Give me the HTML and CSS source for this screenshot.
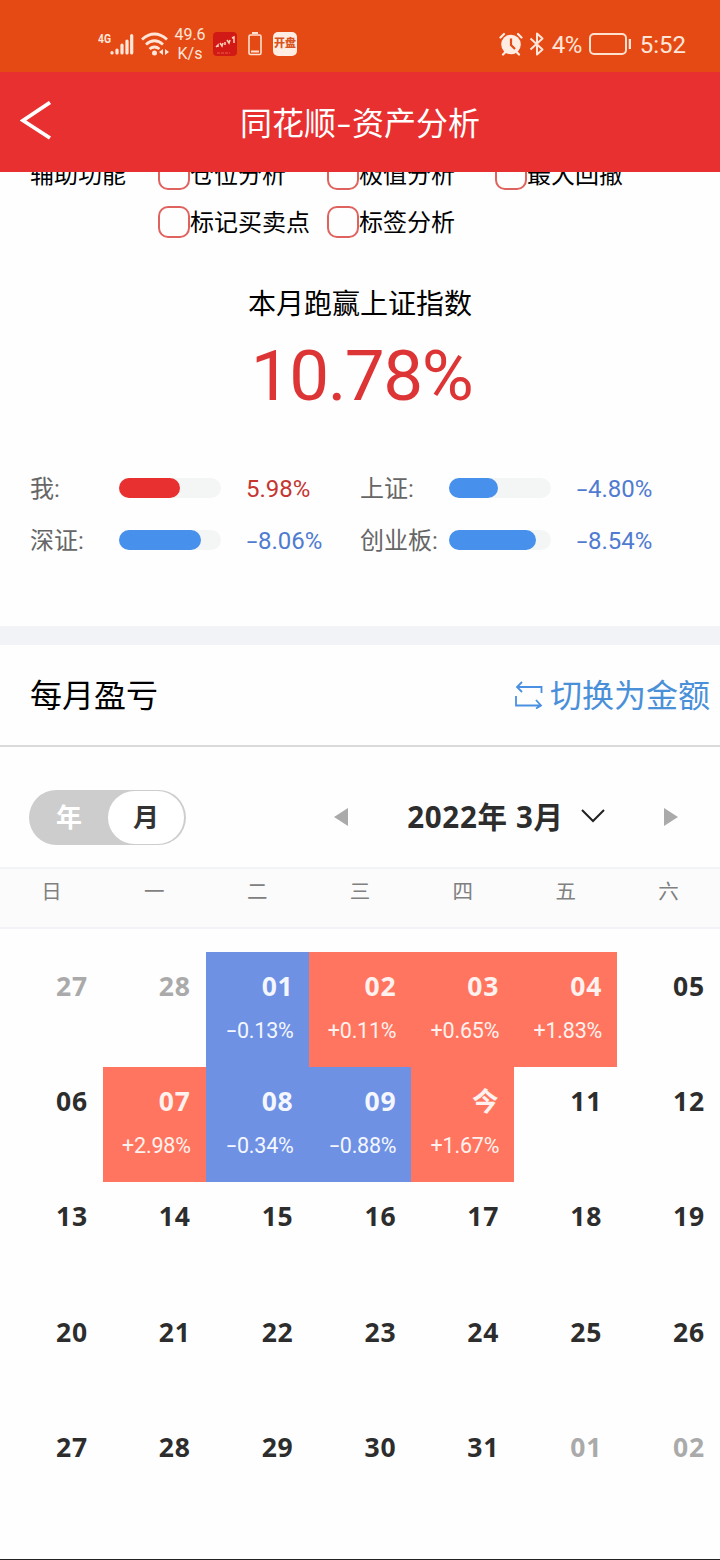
FILE: index.html
```html
<!DOCTYPE html>
<html lang="zh-CN">
<head>
    <meta charset="UTF-8">
    <meta name="viewport" content="width=device-width, initial-scale=1.0">
    <title>同花顺-资产分析</title>
    <link rel="stylesheet" href="styles.css">
</head>
<body>

    <div class="status-bar">
        <div class="status-left">
            <svg class="signal" width="36" height="26" viewBox="0 0 36 26">
                <text x="0" y="12" class="signal-text" textLength="13" lengthAdjust="spacingAndGlyphs">4G</text>
                <path d="M14.5 21.500v-.5M19.5 21.500v-3M24.5 21.500v-8M29.5 21.500v-12M34.2 21.500V4" transform="translate(-.5 .5)" fill="none" stroke="#ffe6d9" stroke-width="3.200" stroke-linecap="round"/>
            </svg>
            <svg class="wifi" width="28" height="26" viewBox="0 0 28 26">
                <path d="M1 8.5Q13.5-2.500 26 8.500M5 13.500Q13.500 6 22 13.500M8.500 18Q13.500 14 18.500 18" fill="none" stroke="#ffe6d9" stroke-width="2.800"/>
                <circle cx="13.500" cy="22" r="2.500" fill="#ffe6d9"/>
                <path d="M22 18v6l-4-3zM24 18v6l4-3z" fill="#ffe6d9"/>
            </svg>
            <div class="speed"><span>49.6</span><span>K/s</span></div>
            <svg class="stock-icon" width="24" height="24" viewBox="0 0 24 24">
                <rect width="24" height="24" rx="4" fill="#d11a16"/>
                <path d="M3 15l2-2v2M7 11l2 3 1-3M12 10v3M14 8l2 3 1-3M19 6l2-1v6" fill="none" stroke="#ffd2b8" stroke-width="1.500"/>
                <path d="M4 21h13" stroke="#ee5c45" stroke-dasharray="3 1"/>
            </svg>
            <svg class="battery-low" width="14" height="24" viewBox="0 0 14 24">
                <path d="M4 1h6" stroke="#ffe0cf" stroke-width="2"/>
                <rect x="1" y="3" width="12" height="19.500" rx="1.500" fill="none" stroke="#ffe0cf" stroke-width="1.600"/>
                <path d="M3 19.500h8" stroke="#ffe0cf" stroke-width="2"/>
            </svg>
            <div class="app-badge">开盘</div>
        </div>
        <div class="status-right">
            <svg width="24" height="24" viewBox="0 0 24 24">
                <circle cx="12" cy="12.500" r="9.800" fill="#ffece2"/>
                <path d="M1.500 5.500L5 2M22.500 5.500L19 2M4 22.500l2.500-2.500M20 22.500L17.500 20" stroke="#ffece2" stroke-width="2.200" stroke-linecap="round"/>
                <path d="M12 6.500v6.500l4 4" fill="none" stroke="#e64a14" stroke-width="2.200"/>
            </svg>
            <svg class="bluetooth" width="16" height="24" viewBox="0 0 16 24">
                <path d="M1.500 6.500l12 11-5.500 5V1.500l5.500 5-12 11" fill="none" stroke="#ffe6d9" stroke-width="2" stroke-linejoin="round"/>
            </svg>
            <span class="battery-text">4%</span>
            <svg class="battery" width="42" height="24" viewBox="0 0 42 24">
                <rect x="1" y="2" width="36" height="20" rx="4" fill="none" stroke="#ffe0cf" stroke-width="2"/>
                <path d="M41 7v10" stroke="#ffe6d9" stroke-width="2.600"/>
            </svg>
            <span class="clock">5:52</span>
        </div>
    </div>

    <div class="header">
        <svg class="back" width="32" height="40" viewBox="0 0 32 40">
            <path d="M30 1.500L3 19.500l27 17.500" fill="none" stroke="#fff" stroke-width="3.800"/>
        </svg>
        <h1>同花顺<span class="title-dash">-</span>资产分析</h1>
    </div>

    <div class="content">
        <div class="filters">
            <div class="filter-title">辅助功能</div>
            <div class="filter"><i class="checkbox"></i><span>仓位分析</span></div>
            <div class="filter"><i class="checkbox"></i><span>极值分析</span></div>
            <div class="filter"><i class="checkbox"></i><span>最大回撤</span></div>
            <div class="filter second-row"><i class="checkbox"></i><span>标记买卖点</span></div>
            <div class="filter"><i class="checkbox"></i><span>标签分析</span></div>
        </div>

        <div class="summary">
            <h2>本月跑赢上证指数</h2>
            <div class="big-number">10.78%</div>
        </div>

        <div class="compare">
            <div class="compare-item">
                <span class="compare-name">我:</span>
                <div class="bar"><div class="bar-fill red" style="width: 60%"></div></div>
                <span class="compare-value up">5.98%</span>
            </div>
            <div class="compare-item">
                <span class="compare-name">上证:</span>
                <div class="bar"><div class="bar-fill" style="width: 48%"></div></div>
                <span class="compare-value"><b class="minus">-</b>4.80%</span>
            </div>
            <div class="compare-item">
                <span class="compare-name">深证:</span>
                <div class="bar"><div class="bar-fill" style="width: 80.6%"></div></div>
                <span class="compare-value"><b class="minus">-</b>8.06%</span>
            </div>
            <div class="compare-item">
                <span class="compare-name">创业板:</span>
                <div class="bar"><div class="bar-fill" style="width: 85.4%"></div></div>
                <span class="compare-value"><b class="minus">-</b>8.54%</span>
            </div>
        </div>
    </div>

    <div class="section-title">
        <h3>每月盈亏</h3>
        <div class="switch-money">
            <svg width="28" height="28" viewBox="0 0 28 28">
                <path d="M7 1L2 6l5 5M2 6h24.500v6M1 15v9.500h25M21 19l5 5.500-5 3" fill="none" stroke="#4a90e2" stroke-width="1.800"/>
            </svg>
            <span>切换为金额</span>
        </div>
    </div>

    <div class="toolbar">
        <div class="toggle">
            <span>年</span>
            <span class="active">月</span>
        </div>
        <div class="month-picker">
            <i class="arrow-left"></i>
            <div class="month">
                <span>2022年 3月</span>
                <svg width="24" height="14" viewBox="0 0 24 14">
                    <path d="M1 1l11 11L23 1" fill="none" stroke="#222" stroke-width="2"/>
                </svg>
            </div>
            <i class="arrow-right"></i>
        </div>
    </div>

    <div class="week">
        <span>日</span><span>一</span><span>二</span><span>三</span><span>四</span><span>五</span><span>六</span>
    </div>

    <div class="calendar">
        <div class="day other">27</div>
        <div class="day other">28</div>
        <div class="day loss">01<small><b class="minus">-</b>0.13%</small></div>
        <div class="day gain">02<small>+0.11%</small></div>
        <div class="day gain">03<small>+0.65%</small></div>
        <div class="day gain">04<small>+1.83%</small></div>
        <div class="day">05</div>

        <div class="day">06</div>
        <div class="day gain">07<small>+2.98%</small></div>
        <div class="day loss">08<small><b class="minus">-</b>0.34%</small></div>
        <div class="day loss">09<small><b class="minus">-</b>0.88%</small></div>
        <div class="day gain">今<small>+1.67%</small></div>
        <div class="day">11</div>
        <div class="day">12</div>

        <div class="day">13</div>
        <div class="day">14</div>
        <div class="day">15</div>
        <div class="day">16</div>
        <div class="day">17</div>
        <div class="day">18</div>
        <div class="day">19</div>

        <div class="day">20</div>
        <div class="day">21</div>
        <div class="day">22</div>
        <div class="day">23</div>
        <div class="day">24</div>
        <div class="day">25</div>
        <div class="day">26</div>

        <div class="day">27</div>
        <div class="day">28</div>
        <div class="day">29</div>
        <div class="day">30</div>
        <div class="day">31</div>
        <div class="day other">01</div>
        <div class="day other">02</div>
    </div>

</body>
</html>
```

FILE: styles.css
```css
* {
    box-sizing: border-box;
}

body {
    font-family: Roboto, "Noto Sans CJK SC", sans-serif;
    background-color: #fefefe;
    color: #000;
    margin: 0;
    height: 1560px;
    overflow: hidden;
    border-bottom: 1px solid #222;
}

h1, h2, h3 {
    margin: 0;
    font-weight: normal;
}

svg {
    display: block;
    flex: none;
}

/* Phone status bar */
.status-bar {
    height: 72px;
    padding: 16px 34px 0 98px;
    display: flex;
    justify-content: space-between;
    background-color: #e64a14;
    color: #ffe6d9;
}

.status-left,
.status-right {
    display: flex;
    align-items: center;
    height: 56px;
}

.signal-text {
    font-size: 13px;
    font-weight: bold;
    fill: #ffe6d9;
}

.wifi {
    margin-left: 7px;
}

.speed {
    display: flex;
    flex-direction: column;
    align-items: center;
    width: 34px;
    margin-left: 4px;
    font-size: 16px;
    line-height: 19px;
}

.stock-icon {
    margin-left: 6px;
}

.battery-low {
    margin-left: 11px;
}

.app-badge {
    width: 24px;
    height: 24px;
    margin-left: 11px;
    border-radius: 5px;
    background-color: #ffece2;
    color: #d9541f;
    font-size: 11px;
    font-weight: 900;
    line-height: 24px;
    text-align: center;
}

.bluetooth {
    margin-left: 6px;
}

.battery-text {
    width: 31px;
    margin: 2px 0 0 7px;
    font-size: 24px;
    letter-spacing: -0.5px;
}

.battery {
    margin-left: 6px;
}

.clock {
    margin: 2px 0 0 9px;
    font-size: 24px;
}

/* Header */
.header {
    display: flex;
    align-items: center;
    height: 100px;
    padding: 0 52px 3px 20px;
    background-color: #e93030;
    color: #fff;
}

.header h1 {
    flex: 1;
    text-align: center;
    font-size: 32px;
}

.title-dash {
    display: inline-block;
    width: 16px;
    transform: scaleX(1.5);
}

/* The font's hyphen is short, stretch it to a minus sign */
.minus {
    display: inline-block;
    width: 0.5em;
    font-weight: normal;
    text-align: center;
    transform: scaleX(1.6);
}

/* Scrolled content */
.content {
    height: 454px;
    overflow: hidden;
}

.filters {
    display: grid;
    grid-template-columns: 128px 169px 168px 1fr;
    grid-auto-rows: 48px;
    margin-top: -22px;
    padding-left: 30px;
    font-size: 24px;
    line-height: 50px;
}

.filter {
    display: flex;
    align-items: center;
    white-space: nowrap;
}

.second-row {
    grid-column: 2;
}

.checkbox {
    width: 32px;
    height: 32px;
    flex: none;
    border: 2px solid #e0625e;
    border-radius: 10px;
}

.filter span {
    padding-top: 1px;
}

.summary {
    margin-top: 39px;
    text-align: center;
}

.summary h2 {
    font-size: 28px;
    line-height: 40px;
}

.big-number {
    margin-top: 9px;
    font-size: 71px;
    line-height: 84px;
    letter-spacing: -1.500px;
    padding-left: 3px;
    color: #dd3535;
}

.compare {
    display: grid;
    grid-template-columns: 330px 1fr;
    grid-auto-rows: 52px;
    margin-top: 44px;
    padding-left: 30px;
}

.compare-item {
    display: flex;
    align-items: center;
    font-size: 24px;
    color: #666;
}

.compare-name {
    width: 89px;
    padding-bottom: 4px;
    white-space: nowrap;
}

.bar {
    width: 102px;
    height: 20px;
    border-radius: 10px;
    background-color: #f4f6f6;
}

.bar-fill {
    height: 20px;
    border-radius: 10px;
    background-color: #4790ec;
}

.bar-fill.red {
    background-color: #e93030;
}

.compare-value {
    margin-left: 25px;
    padding-top: 1px;
    color: #507bd0;
}

.compare-value.up {
    color: #c53630;
}

/* Monthly profit and loss */
.section-title {
    display: flex;
    align-items: center;
    justify-content: space-between;
    height: 121px;
    padding: 0 10px 0 30px;
    border-top: 19px solid #f2f3f7;
    border-bottom: 2px solid #dadada;
    font-size: 32px;
}

.section-title h3 {
    padding-bottom: 4px;
    font-size: 32px;
}

.switch-money {
    display: flex;
    align-items: center;
    gap: 7px;
    color: #4a90d9;
}

.switch-money span {
    padding-bottom: 4px;
}

.toolbar {
    display: flex;
    align-items: center;
    justify-content: space-between;
    height: 120px;
    padding: 21px 42px 0 29px;
}

.toggle {
    display: flex;
    width: 157px;
    height: 55px;
    padding: 1px;
    border-radius: 28px;
    background-color: #cdcdcd;
    color: #fff;
    font-size: 26px;
    font-weight: bold;
    line-height: 54px;
    text-align: center;
}

.toggle span {
    width: 78px;
}

.toggle .active {
    width: 76px;
    border-radius: 27px;
    background-color: #fff;
    color: #333;
}

.month-picker {
    display: flex;
    align-items: center;
    justify-content: space-between;
    width: 344px;
}

.month {
    display: flex;
    align-items: center;
    gap: 17px;
    padding-bottom: 4px;
    color: #2d2d2d;
    font-family: "Noto Sans", "Noto Sans CJK SC", sans-serif;
    font-size: 29.500px;
    font-weight: bold;
    letter-spacing: 0.7px;
    white-space: nowrap;
}

.arrow-left,
.arrow-right {
    margin-bottom: 2px;
    border: 9px solid transparent;
}

.arrow-left {
    border-left: none;
    border-right: 14px solid #aaa;
}

.arrow-right {
    border-right: none;
    border-left: 14px solid #aaa;
}

.week {
    display: grid;
    grid-template-columns: repeat(7, 1fr);
    height: 62px;
    border-top: 2px solid #f2f3f6;
    border-bottom: 2px solid #f2f3f6;
    background-color: #fbfbfb;
    color: #808080;
    font-size: 20.500px;
    line-height: 47px;
    text-align: center;
}

.calendar {
    display: grid;
    grid-template-columns: repeat(7, 1fr);
    grid-auto-rows: 115.200px;
    margin-top: 23px;
}

.day {
    padding: 14px 15px 0 0;
    color: #2d2d2d;
    font-family: "Noto Sans", "Noto Sans CJK SC", sans-serif;
    font-size: 26.500px;
    font-weight: bold;
    letter-spacing: 0.8px;
    line-height: 40px;
    text-align: right;
}

.day small {
    display: block;
    font-family: Roboto, sans-serif;
    font-size: 21.500px;
    font-weight: normal;
    letter-spacing: -0.2px;
    line-height: 50px;
}

.day.other {
    color: #aaa;
}

.day.gain {
    background-color: #ff7560;
    color: #fff2ee;
}

.day.loss {
    background-color: #6e91e4;
    color: #f4f7ff;
}
```
